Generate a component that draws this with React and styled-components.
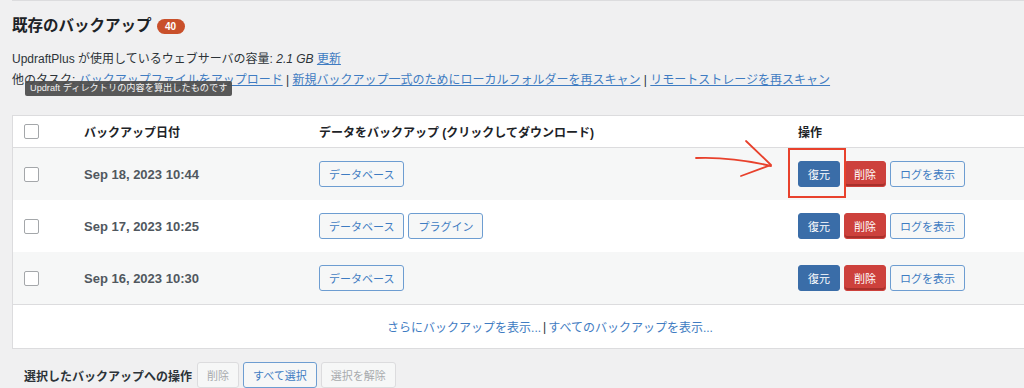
import React from "react";
import styled, { createGlobalStyle } from "styled-components";

const GlobalStyle = createGlobalStyle`
  html, body {
    margin: 0;
    padding: 0;
    background: #f0f0f1;
    overflow: hidden;
  }
  body {
    font-family: "Liberation Sans", "Noto Sans CJK JP", sans-serif;
    color: #3c434a;
  }
`;

const backups = [
  { date: "Sep 18, 2023 10:44", data: ["データベース"], striped: true, marked: true },
  { date: "Sep 17, 2023 10:25", data: ["データベース", "プラグイン"] },
  { date: "Sep 16, 2023 10:30", data: ["データベース"], striped: true },
];

const App = () => {
  return (
    <>
      <GlobalStyle />
      <Page>
        <TopRule />
        <Title>
          既存のバックアップ <Count>40</Count>
        </Title>
        <Info>
          <Line>
            UpdraftPlus が使用しているウェブサーバの容量: <em>2.1 GB</em> <a href="#">更新</a>
          </Line>
          <Line>
            他のタスク: <a href="#">バックアップファイルをアップロード</a> |{" "}
            <a href="#">新規バックアップ一式のためにローカルフォルダーを再スキャン</a> |{" "}
            <a href="#">リモートストレージを再スキャン</a>
            <Tooltip>Updraft ディレクトリの内容を算出したものです</Tooltip>
          </Line>
        </Info>

        <Table>
          <HeadRow>
            <Cell>
              <Check />
            </Cell>
            <HeadText>バックアップ日付</HeadText>
            <HeadText>データをバックアップ (クリックしてダウンロード)</HeadText>
            <HeadText>操作</HeadText>
          </HeadRow>
          {backups.map(b => (
            <Row key={b.date} $striped={b.striped}>
              <Cell>
                <Check />
              </Cell>
              <DateText>{b.date}</DateText>
              <Cell>
                <Buttons>
                  {b.data.map(d => (
                    <Button key={d} $variant="outline">{d}</Button>
                  ))}
                </Buttons>
              </Cell>
              <Cell>
                <Buttons>
                  <Button $variant="primary">復元</Button>
                  <Button $variant="danger">削除</Button>
                  <Button $variant="outline">ログを表示</Button>
                </Buttons>
              </Cell>
              {b.marked && (
                <Annotation width="200" height="60" viewBox="0 0 200 60">
                  <path
                    d="M13 10 C 38 9, 63 12, 88 18"
                    fill="none"
                    stroke="#e8412c"
                    strokeWidth="1.8"
                    strokeLinecap="round"
                  />
                  <path
                    d="M63 -7 L88 17 L58 28"
                    fill="none"
                    stroke="#e8412c"
                    strokeWidth="1.8"
                    strokeLinecap="round"
                    strokeLinejoin="round"
                  />
                  <rect x="106" y="1" width="56" height="48" fill="none" stroke="#e8412c" strokeWidth="2" />
                </Annotation>
              )}
            </Row>
          ))}
          <Footer>
            <a href="#">さらにバックアップを表示...</a> | <a href="#">すべてのバックアップを表示...</a>
          </Footer>
        </Table>

        <BulkBar>
          <BulkLabel>選択したバックアップへの操作</BulkLabel>
          <Button $variant="disabled">削除</Button>
          <Button $variant="outline">すべて選択</Button>
          <Button $variant="disabled">選択を解除</Button>
        </BulkBar>
      </Page>
    </>
  );
};

const Page = styled.div`
  padding-left: 12px;
  width: 1075px;
`;

const TopRule = styled.div`
  height: 1px;
  background: #dcdcde;
`;

const Title = styled.h2`
  margin: 15px 0 0;
  font-size: 15.5px;
  line-height: 20px;
  font-weight: 700;
  color: #1d2327;
  display: flex;
  align-items: center;
  gap: 5px;
`;

const Count = styled.span`
  display: inline-flex;
  align-items: center;
  justify-content: center;
  width: 28px;
  height: 15px;
  border-radius: 8px;
  background: #c9502b;
  color: #fff;
  font-size: 10px;
  font-weight: 700;
  margin-top: 1px;
`;

const Info = styled.div`
  margin-top: 13px;
  font-size: 12px;
  color: #2c3338;
  a {
    color: #3f7cc2;
    text-decoration: underline;
  }
  em {
    font-style: italic;
  }
`;

const Line = styled.div`
  position: relative;
  line-height: 21px;
`;

const Tooltip = styled.span`
  position: absolute;
  left: 13px;
  top: 11px;
  background: rgba(75, 75, 75, 0.92);
  color: #f2f2f2;
  font-size: 9.2px;
  line-height: 15px;
  padding: 0 5px;
  border-radius: 2px;
  white-space: nowrap;
`;

const Table = styled.div`
  margin-top: 24px;
  background: #fff;
  border: 1px solid #dcdcde;
  border-right: none;
`;

const columns = `71px 235px 479px 1fr`;

const HeadRow = styled.div`
  display: grid;
  grid-template-columns: ${columns};
  align-items: center;
  height: 31px;
  border-bottom: 1px solid #dcdcde;
`;

const Row = styled.div`
  position: relative;
  display: grid;
  grid-template-columns: ${columns};
  align-items: center;
  height: 52px;
  background: ${p => (p.$striped ? "#f6f7f7" : "#fff")};
`;

const Cell = styled.div`
  display: flex;
  align-items: center;
  &:first-child {
    padding-left: 11px;
  }
`;

const HeadText = styled.div`
  font-size: 12px;
  font-weight: 700;
  color: #1d2327;
`;

const DateText = styled.div`
  font-size: 13px;
  font-weight: 700;
  color: #50575e;
`;

const Check = styled.span`
  display: inline-block;
  width: 13px;
  height: 13px;
  border: 1.5px solid #a4a7aa;
  border-radius: 2px;
  background: #fff;
`;

const Buttons = styled.div`
  display: flex;
  gap: 4px;
`;

const variants = {
  outline: `background: #f6f7f7; border-color: #6d9dd1; color: #3f7cc2;`,
  primary: `background: #3a6da8; border-color: #3a6da8; color: #fff;`,
  danger: `background: #cd413c; border-color: #cd413c; color: #fff; box-shadow: inset 0 -2px 0 #a8302b;`,
  disabled: `background: #f6f7f7; border-color: #dcdcde; color: #a7aaad;`,
};

const Button = styled.button`
  font-family: inherit;
  font-size: 11px;
  height: 26px;
  padding: 0 9px;
  border: 1px solid;
  border-radius: 3px;
  cursor: pointer;
  white-space: nowrap;
  ${p => variants[p.$variant]}
`;

const Annotation = styled.svg`
  position: absolute;
  left: 670px;
  top: 0;
  overflow: visible;
  pointer-events: none;
`;

const Footer = styled.div`
  border-top: 1px solid #dcdcde;
  height: 43px;
  display: flex;
  align-items: center;
  justify-content: center;
  font-size: 12px;
  color: #2c3338;
  a {
    color: #3f7cc2;
    text-decoration: none;
    margin: 0 2px;
  }
`;

const BulkBar = styled.div`
  display: flex;
  align-items: center;
  gap: 4px;
  margin-top: 13px;
  padding-left: 12px;
`;

const BulkLabel = styled.span`
  font-size: 12px;
  font-weight: 700;
  color: #2c3338;
  margin-right: 1px;
`;

export default App;
